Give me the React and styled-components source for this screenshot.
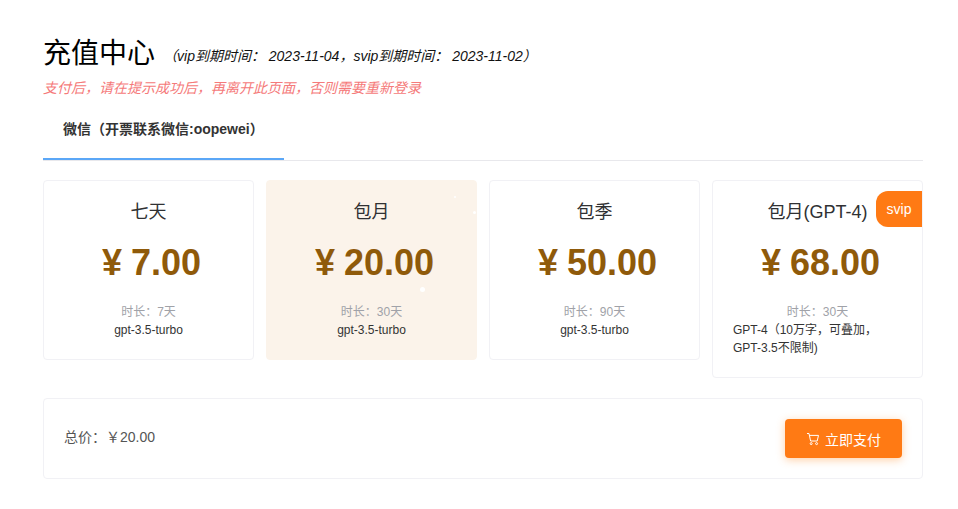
import React from "react";
import styled, { createGlobalStyle } from "styled-components";

const GlobalStyle = createGlobalStyle`
  html, body {
    margin: 0;
    background: #fff;
  }
  body {
    font-family: "Liberation Sans", "Noto Sans CJK SC", sans-serif;
  }
`;

const plans = [
  { name: "七天", price: "7.00", days: 7, desc: "gpt-3.5-turbo" },
  { name: "包月", price: "20.00", days: 30, desc: "gpt-3.5-turbo", active: true },
  { name: "包季", price: "50.00", days: 90, desc: "gpt-3.5-turbo" },
  {
    name: "包月(GPT-4)",
    price: "68.00",
    days: 30,
    desc: "GPT-4（10万字，可叠加，GPT-3.5不限制)",
    badge: "svip",
    left: true,
  },
];

const sparkles = [
  { x: 187, y: 15, size: 2 },
  { x: 206, y: 30, size: 3 },
  { x: 153, y: 106, size: 5 },
];

function CartIcon() {
  return (
    <svg width="14" height="14" viewBox="0 0 14 14" fill="none" stroke="currentColor" strokeWidth="1">
      <path d="M1 1.5h2l1.6 7.5h6.6l1.3-5.6H3.5" />
      <circle cx="5.2" cy="11.6" r="1" />
      <circle cx="10.6" cy="11.6" r="1" />
    </svg>
  );
}

export default function App() {
  return (
    <Page>
      <GlobalStyle />
      <Heading>
        <Title>充值中心</Title>
        <Expiry>（vip到期时间： 2023-11-04，svip到期时间： 2023-11-02）</Expiry>
      </Heading>
      <Warning>支付后，请在提示成功后，再离开此页面，否则需要重新登录</Warning>
      <Tabs>
        <Tab>微信（开票联系微信:oopewei）</Tab>
      </Tabs>
      <Plans>
        {plans.map((plan) => (
          <Plan key={plan.name + plan.price} $active={plan.active}>
            {plan.badge && <Badge>{plan.badge}</Badge>}
            {plan.active &&
              sparkles.map((s) => (
                <Sparkle
                  key={s.x}
                  style={{ left: s.x, top: s.y, width: s.size, height: s.size }}
                />
              ))}
            <PlanName>{plan.name}</PlanName>
            <Price>
              <Yen>¥</Yen>
              {plan.price}
            </Price>
            <Duration>时长：{plan.days}天</Duration>
            <Desc $left={plan.left}>{plan.desc}</Desc>
          </Plan>
        ))}
      </Plans>
      <Footer>
        <Total>总价：￥20.00</Total>
        <PayButton>
          <CartIcon />
          立即支付
        </PayButton>
      </Footer>
    </Page>
  );
}

const Page = styled.div`
  width: 880px;
  margin: 0 0 0 43px;
  padding-top: 36px;
`;

const Heading = styled.div`
  display: flex;
  align-items: center;
  height: 36px;
`;

const Title = styled.h1`
  margin: 0;
  font-size: 28px;
  line-height: 36px;
  font-weight: 400;
  color: #000;
`;

const Expiry = styled.span`
  margin: 2px 0 0 8px;
  font-size: 14px;
  font-style: italic;
  color: #111;
`;

const Warning = styled.div`
  margin-top: 5px;
  font-size: 14px;
  line-height: 22px;
  font-style: italic;
  color: #f56c6c;
  opacity: 0.9;
`;

const Tabs = styled.div`
  margin-top: 7px;
  height: 54px;
  border-bottom: 1px solid #e8e8ec;
`;

const Tab = styled.div`
  box-sizing: border-box;
  width: 241px;
  height: 54px;
  padding: 0 0 0 20px;
  font-size: 14px;
  font-weight: 700;
  line-height: 46px;
  color: #333;
  border-bottom: 2px solid #5ba7f7;
`;

const Plans = styled.div`
  display: flex;
  align-items: flex-start;
  gap: 12px;
  margin-top: 19px;
`;

const Plan = styled.div`
  position: relative;
  overflow: hidden;
  box-sizing: border-box;
  flex: 0 0 211px;
  min-height: 180px;
  padding: 19px 20px 20px;
  text-align: center;
  background: ${(p) => (p.$active ? "#fbf3ea" : "#fff")};
  border: 1px solid ${(p) => (p.$active ? "#fbf3ea" : "#f1f1f5")};
  border-radius: 4px;
`;

const Badge = styled.div`
  position: absolute;
  top: 10px;
  right: 0;
  width: 46px;
  height: 36px;
  font-size: 14px;
  line-height: 36px;
  color: #fff;
  background: #ff7a14;
  border-radius: 12px 0 0 12px;
`;

const Sparkle = styled.i`
  position: absolute;
  background: #fff;
  border-radius: 50%;
`;

const PlanName = styled.div`
  font-size: 18px;
  line-height: 24px;
  color: #303133;
`;

const Price = styled.div`
  margin-top: 17px;
  padding-left: 6px;
  font-size: 36px;
  line-height: 44px;
  font-weight: 700;
  color: #8f5a0a;
`;

const Yen = styled.span`
  margin-right: 9px;
`;

const Duration = styled.div`
  margin-top: 18px;
  font-size: 12px;
  line-height: 18px;
  color: #a0a2a8;
`;

const Desc = styled.div`
  padding: ${(p) => (p.$left ? "0 20px 0 0" : "0")};
  font-size: 12px;
  line-height: 18px;
  color: #333;
  text-align: ${(p) => (p.$left ? "left" : "center")};
`;

const Footer = styled.div`
  box-sizing: border-box;
  display: flex;
  align-items: center;
  justify-content: space-between;
  height: 81px;
  margin-top: 20px;
  padding: 0 20px;
  border: 1px solid #f1f1f5;
  border-radius: 4px;
`;

const Total = styled.div`
  margin-bottom: 6px;
  font-size: 14px;
  color: #555;
`;

const PayButton = styled.button`
  display: flex;
  align-items: center;
  justify-content: center;
  gap: 5px;
  width: 117px;
  height: 39px;
  padding: 0;
  font-family: inherit;
  font-size: 14px;
  color: #fff;
  background: #ff7a14;
  border: none;
  border-radius: 4px;
  box-shadow: 0 2px 8px rgba(255, 150, 60, 0.45);
`;
